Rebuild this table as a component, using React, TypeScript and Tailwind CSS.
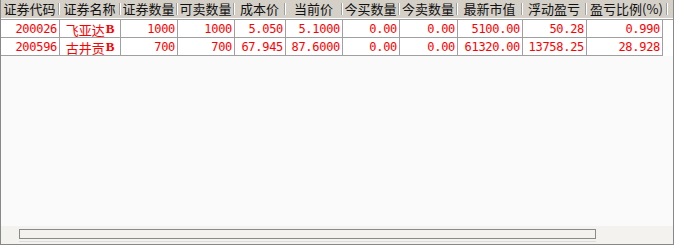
import React from "react";

const cols = [
  { title: "证券代码", w: "w-[59px]" },
  { title: "证券名称", w: "w-[61px]" },
  { title: "证券数量", w: "w-[57px]" },
  { title: "可卖数量", w: "w-[57px]" },
  { title: "成本价", w: "w-[51px]" },
  { title: "当前价", w: "w-[57px]" },
  { title: "今买数量", w: "w-[57px]" },
  { title: "今卖数量", w: "w-[58px]" },
  { title: "最新市值", w: "w-[65px]" },
  { title: "浮动盈亏", w: "w-[64px]" },
  { title: "盈亏比例(%)", w: "w-[81px]" },
];

const rowWidths = [
  "w-[59px]",
  "w-[61px]",
  "w-[57px]",
  "w-[57px]",
  "w-[51px]",
  "w-[57px]",
  "w-[57px]",
  "w-[58px]",
  "w-[65px]",
  "w-[64px]",
  "w-[76px]",
];

const rows = [
  ["200026", "飞亚达", "1000", "1000", "5.050", "5.1000", "0.00", "0.00", "5100.00", "50.28", "0.990"],
  ["200596", "古井贡", "700", "700", "67.945", "87.6000", "0.00", "0.00", "61320.00", "13758.25", "28.928"],
];

const cjk = "font-['Noto_Sans_CJK_SC','Noto_Sans',sans-serif]";
const mono = "font-['DejaVu_Sans_Mono',monospace]";

export default function App() {
  return (
    <div className="w-[674px] h-[245px] flex flex-col bg-[#fafafa] border-l border-r border-b border-[#888888] overflow-hidden">
      {/* header */}
      <div className="flex h-[18px] bg-[#d4d0c8] text-[13px] text-[#111] leading-[18px]">
        {cols.map((c) => (
          <div key={c.title} className={`${c.w} flex shrink-0`}>
            <span className={`flex-1 text-center whitespace-nowrap ${cjk}`}>{c.title}</span>
            <span className="w-[2px] h-[12px] self-center border-l border-[#a0a0a0] border-r border-r-white" />
          </div>
        ))}
      </div>
      <div className="h-[1px] bg-white" />
      <div className="h-[1px] bg-[#a0a0a0]" />

      {/* rows */}
      {rows.map((r) => (
        <div key={r[0]} className="flex h-[18px] bg-white">
          {r.map((v, i) => (
            <div
              key={i}
              className={`${rowWidths[i]} shrink-0 h-[18px] border-r border-b border-[#a0a0a0] text-[#ff0000] leading-[19px] whitespace-nowrap ${
                i === 1 ? `text-center text-[13px] ${cjk}` : `text-right pr-[2px] text-[12px] tracking-[-0.3px] ${mono}`
              }`}
            >
              {i === 1 ? (
                <>
                  {v}
                  <span className="relative -top-[2px] ml-[1px] font-['Liberation_Serif',serif] font-bold text-[13px]">B</span>
                </>
              ) : (
                v
              )}
            </div>
          ))}
        </div>
      ))}

      <div className="flex-1" />

      {/* horizontal scrollbar */}
      <div className="h-[18px] bg-[#f3f2ef] pl-[18px] pt-[3px] flex flex-col">
        <div className="w-[577px] h-[10px] border border-[#8a8a8a]" />
        <div className="w-[577px] h-[1px] mt-[2px] bg-[#dcdcdc]" />
      </div>
    </div>
  );
}
